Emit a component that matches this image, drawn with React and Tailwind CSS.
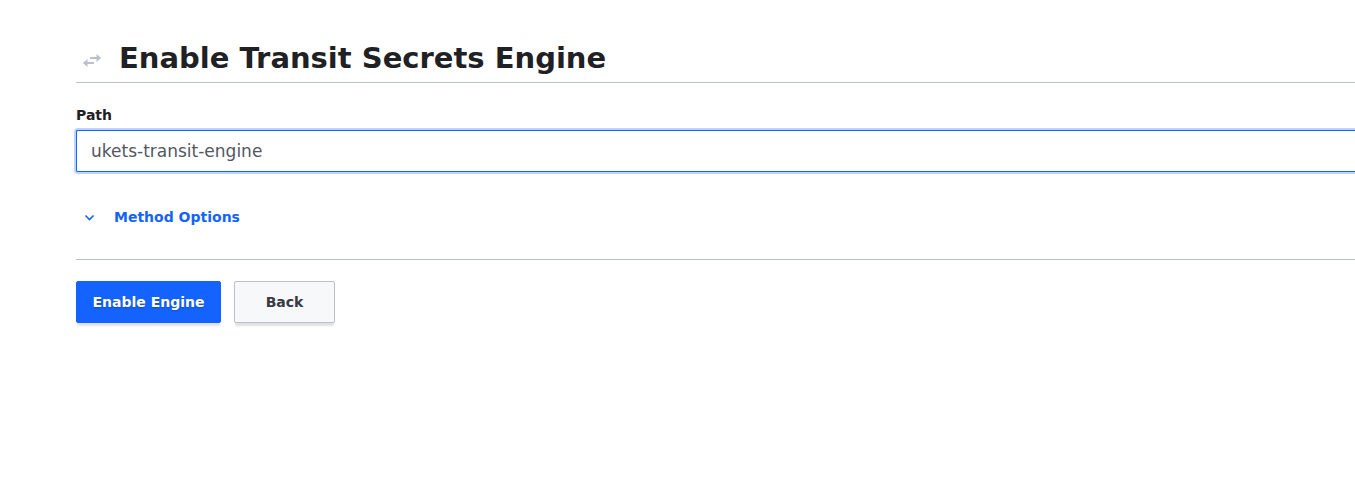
import React, { useState } from "react";

export default function App() {
  const [path, setPath] = useState("ukets-transit-engine");
  return (
    <main className="min-h-screen bg-white pl-[76px] pt-[38px] text-[#1f2124] font-['DejaVu_Sans',sans-serif]">
      <header className="flex items-center border-b border-[#bac1cc] pb-1">
        <svg className="ml-[6px] mr-[17px] mt-1.5 h-5 w-5 shrink-0 text-[#bac1cc]" viewBox="0 0 20 20" fill="currentColor" aria-hidden="true">
          <path d="M14.5 3v3H8v2h6.5v3l4.7-4zM5.5 8v3H12v2H5.5v3L.8 12z" />
        </svg>
        <h1 className="text-[29px] leading-10 font-bold">Enable Transit Secrets Engine</h1>
      </header>
      <form onSubmit={(e) => e.preventDefault()}>
        <div className="flex flex-col pt-[22px]">
          <label htmlFor="path" className="text-sm leading-5 font-bold">Path</label>
          <input
            id="path"
            type="text"
            value={path}
            onChange={(e) => setPath(e.target.value)}
            className="mt-[5px] h-[42px] w-full rounded-l-[2px] border border-r-0 border-[#1563ff] bg-white px-[14px] text-[17px] text-[#525761] shadow-[0_0_0_2px_#bfd4ff] outline-none"
          />
        </div>
        <div className="border-b border-[#bac1cc] pt-[30px] pb-[27px]">
          <button type="button" className="flex h-[30px] items-center text-sm font-bold text-[#1563ff]">
            <svg className="ml-2 mr-[18px] h-3 w-3" viewBox="0 0 12 12" fill="none" stroke="currentColor" strokeWidth="1.6" aria-hidden="true">
              <path d="M1.5 4.5l4 4 4-4" />
            </svg>
            Method Options
          </button>
        </div>
        <div className="flex gap-[13px] pt-[21px]">
          <button type="submit" className="h-[42px] w-[145px] rounded-[2px] border border-[#1563ff] bg-[#1563ff] text-sm font-bold text-white [text-shadow:0_1px_2px_rgba(0,0,0,0.25)] shadow-[0_4px_2px_-1px_rgba(0,0,0,0.12)]">Enable Engine</button>
          <button type="button" className="h-[42px] w-[101px] rounded-[2px] border border-[#bac1cc] bg-[#f7f8fa] text-sm font-bold text-[#373a42] shadow-[0_4px_2px_-1px_rgba(0,0,0,0.12)]">Back</button>
        </div>
      </form>
    </main>
  );
}
